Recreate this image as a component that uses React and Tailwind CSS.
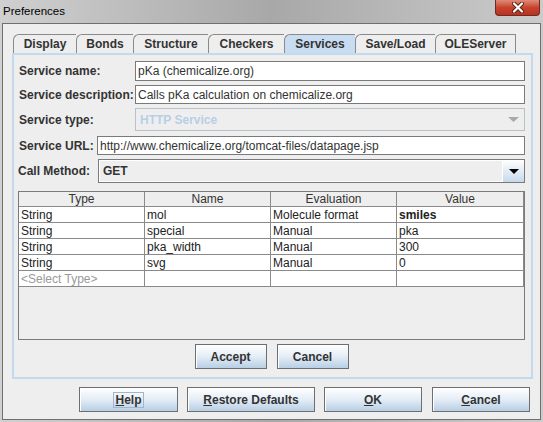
import React from "react";

const tabs = [
  ["Display", 63],
  ["Bonds", 57],
  ["Structure", 75],
  ["Checkers", 76],
  ["Services", 71],
  ["Save/Load", 80],
  ["OLEServer", 81],
];

const rows = [
  ["String", "mol", "Molecule format", "smiles"],
  ["String", "special", "Manual", "pka"],
  ["String", "pka_width", "Manual", "300"],
  ["String", "svg", "Manual", "0"],
];

const btn =
  "flex items-center justify-center h-[25px] border border-[#6e6e6e] bg-linear-to-b from-white via-[#e4edf6] to-[#b8cfe5] shadow-[inset_1px_1px_0_#ffffff] text-[12px] font-bold text-[#333333]";

function Mn({ children }) {
  return <span className="underline underline-offset-1">{children}</span>;
}

const App = () => {
  return (
    <div className="w-[543px] h-[422px] flex flex-col px-[2px] pb-[2px] bg-linear-to-r from-[#d0d0d0] via-[#a8a8a8] to-[#cbcbcb] font-['Liberation_Sans',Arial,sans-serif]">
      {/* Title bar */}
      <div className="h-[23px] flex items-start shrink-0">
        <span className="pl-[1px] pt-[4px] text-[11.5px] leading-[14px] text-black">Preferences</span>
        <div className="ml-auto mr-[1px] w-[45px] h-[16px] rounded-b-[4px] border border-t-0 border-[#6b2a22] bg-linear-to-b from-[#e08a78] via-[#c8432e] to-[#b8321f] flex items-center justify-center">
          <svg width="14" height="11" viewBox="0 0 14 11">
            <path d="M3 1.5 L11 9.5 M11 1.5 L3 9.5" stroke="#5a2018" strokeWidth="4" strokeLinecap="round" />
            <path d="M3 1.5 L11 9.5 M11 1.5 L3 9.5" stroke="#ffffff" strokeWidth="2.2" strokeLinecap="round" />
          </svg>
        </div>
      </div>

      {/* Window content */}
      <div className="flex-1 flex flex-col border border-[#6f6f6f] bg-[#eeeeee] pt-[10px] pl-[9px] pr-[7px]">
        {/* Tabs */}
        <div className="flex ml-[1px] h-[19px]">
          {tabs.map(([name, w], i) => {
            const sel = name === "Services";
            return (
              <div
                key={name}
                style={{ width: w }}
                className={`h-[19px] flex items-center justify-center rounded-tl-[6px] border-t border-l border-[#8a8a8a] text-[12px] font-bold text-[#333333] ${
                  i === tabs.length - 1 ? "border-r" : ""
                } ${sel ? "bg-[#c8ddf2]" : "bg-[#eeeeee]"}`}
              >
                {name}
              </div>
            );
          })}
        </div>

        {/* Panel */}
        <div className="h-[326px] border-2 border-[#c4d9ee] flex flex-col pl-[4px] pr-[6px]">
          <div className="flex items-center h-[20px] mt-[6px]">
            <span className="w-[117px] pl-[1px] text-[12px] font-bold text-[#333333]">Service name:</span>
            <div className="flex-1 h-full bg-white border border-[#7a7a7a] flex items-center pl-[2px] text-[12px] text-[#333333]">
              pKa (chemicalize.org)
            </div>
          </div>
          <div className="flex items-center h-[19px] mt-[4px]">
            <span className="w-[117px] pl-[1px] text-[12px] font-bold text-[#333333]">Service description:</span>
            <div className="flex-1 h-full bg-white border border-[#7a7a7a] flex items-center pl-[2px] text-[12px] text-[#333333]">
              Calls pKa calculation on chemicalize.org
            </div>
          </div>
          <div className="flex items-center h-[23px] mt-[4px]">
            <span className="w-[117px] pl-[1px] text-[12px] font-bold text-[#333333]">Service type:</span>
            <div className="flex-1 h-full bg-[#eeeeee] border border-[#b8c0c8] flex items-center pl-[4px] pr-[5px] text-[12px] font-bold text-[#b8cfe5]">
              HTTP Service
              <svg className="ml-auto" width="11" height="5" viewBox="0 0 11 5">
                <path d="M0 0 L11 0 L5.5 5 Z" fill="#a9a9a9" />
              </svg>
            </div>
          </div>
          <div className="flex items-center h-[19px] mt-[5px]">
            <span className="w-[79px] pl-[1px] text-[12px] font-bold text-[#333333]">Service URL:</span>
            <div className="flex-1 h-full bg-white border border-[#7a7a7a] flex items-center pl-[2px] text-[12px] text-[#333333]">
              http://www.chemicalize.org/tomcat-files/datapage.jsp
            </div>
          </div>
          <div className="flex items-center h-[24px] mt-[4px]">
            <span className="w-[80px] text-[12px] font-bold text-[#333333]">Call Method:</span>
            <div className="flex-1 h-full bg-[#eeeeee] border border-[#7a7a7a] flex items-stretch text-[12px] font-bold text-[#333333]">
              <span className="flex items-center pl-[3px] flex-1 border border-white">GET</span>
              <div className="w-[21px] flex items-center justify-center bg-linear-to-b from-white to-[#c6d9ec]">
                <svg width="10" height="5" viewBox="0 0 10 5">
                  <path d="M0 0 L10 0 L5 5 Z" fill="#000000" />
                </svg>
              </div>
            </div>
          </div>

          {/* Table */}
          <div className="h-[149px] mt-[8px] border border-[#7a7a7a] bg-[#eeeeee] text-[12px] text-[#222222]">
            <div className="grid grid-cols-[126px_126px_126px_1fr] h-[15px]">
              {["Type", "Name", "Evaluation", "Value"].map((h) => (
                <div key={h} className="border-r border-b border-[#8a8a8a] flex items-center justify-center leading-none text-[#333333]">
                  {h}
                </div>
              ))}
            </div>
            {rows.map((r) => (
              <div key={r[1]} className="grid grid-cols-[126px_126px_126px_1fr] h-[16px] bg-white">
                {r.map((c, j) => (
                  <div
                    key={j}
                    className={`border-r border-b border-[#8a8a8a] flex items-center pl-[2px] leading-none ${j === 3 && c === "smiles" ? "font-bold" : ""}`}
                  >
                    {c}
                  </div>
                ))}
              </div>
            ))}
            <div className="grid grid-cols-[126px_126px_126px_1fr] h-[16px] bg-white">
              <div className="border-r border-b border-[#8a8a8a] flex items-center pl-[2px] leading-none text-[#999999]">
                &lt;Select Type&gt;
              </div>
              <div className="border-r border-b border-[#8a8a8a]" />
              <div className="border-r border-b border-[#8a8a8a]" />
              <div className="border-r border-b border-[#8a8a8a]" />
            </div>
          </div>

          <div className="flex justify-center gap-[10px] mt-[4px]">
            <div className={`${btn} w-[72px]`}>Accept</div>
            <div className={`${btn} w-[72px]`}>Cancel</div>
          </div>
        </div>

        {/* Bottom buttons */}
        <div className="flex gap-[9px] ml-[67px] mt-[8px]">
          <div className={`${btn} w-[99px]`}>
            <span className="border border-[#9fb6cd] px-[1px] leading-[14px]">
              <Mn>H</Mn>elp
            </span>
          </div>
          <div className={`${btn} w-[128px]`}>
            <span>
              <Mn>R</Mn>estore Defaults
            </span>
          </div>
          <div className={`${btn} w-[98px]`}>
            <span>
              <Mn>O</Mn>K
            </span>
          </div>
          <div className={`${btn} w-[98px] ml-[1px]`}>
            <span>
              <Mn>C</Mn>ancel
            </span>
          </div>
        </div>
      </div>
    </div>
  );
};

export default App;
